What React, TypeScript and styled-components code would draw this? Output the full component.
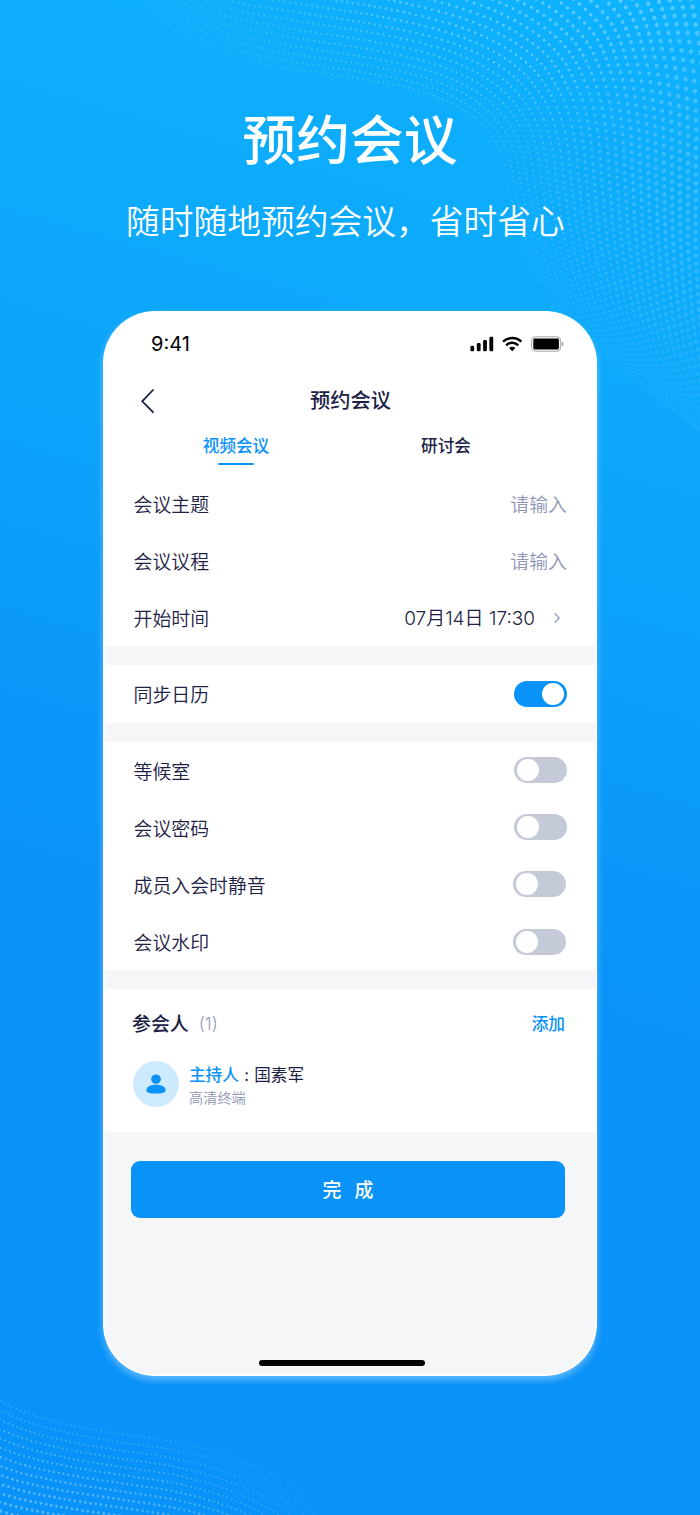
import React from "react";
import styled, { createGlobalStyle } from "styled-components";

const GlobalStyle = createGlobalStyle`
  * { box-sizing: border-box; }
  body {
    margin: 0;
    font-family: Inter, "Noto Sans CJK SC", sans-serif;
    color: #1c2145;
  }
`;

type Point = [number, number];
type Dot = { x: number; y: number; r: number; o: number };
type Rib = { from: Point; to: Point; alpha: number };

const catmull = (a: number, b: number, c: number, d: number, t: number) =>
  0.5 * (2 * b + (c - a) * t + (2 * a - 5 * b + 4 * c - d) * t * t + (3 * b - a - 3 * c + d) * t * t * t);

/* A halftone mesh: columns are evenly spaced along the first curve, rows fan out towards the last one. */
function mesh(ribs: Rib[], rows: number, step: number, ease: number, minRadius: number, maxRadius: number, fullAt: number): Dot[] {
  const point = (u: number, v: number) => {
    const i = Math.floor(u);
    const t = u - i;
    const at = (n: number) => {
      const rib = ribs[Math.max(0, Math.min(ribs.length - 1, n))];
      return [rib.from[0] + (rib.to[0] - rib.from[0]) * v, rib.from[1] + (rib.to[1] - rib.from[1]) * v, rib.alpha];
    };
    const [a, b, c, d] = [at(i - 1), at(i), at(i + 1), at(i + 2)];
    return {
      x: catmull(a[0], b[0], c[0], d[0], t),
      y: catmull(a[1], b[1], c[1], d[1], t),
      o: b[2] + (c[2] - b[2]) * t,
    };
  };

  const columns: number[] = [];
  let travelled = 0;
  let last = point(0, 0);
  for (let s = 1; s < (ribs.length - 1) * 200; s++) {
    const p = point(s / 200, 0);
    travelled += Math.hypot(p.x - last.x, p.y - last.y);
    last = p;
    if (travelled >= step) {
      travelled -= step;
      columns.push(s / 200);
    }
  }

  const dots: Dot[] = [];
  for (let row = 0; row < rows; row++) {
    const v = Math.pow(row / (rows - 1), ease);
    const r = minRadius + (maxRadius - minRadius) * Math.min(1, v / fullAt);
    columns.forEach((u, i) => {
      const next = columns[i + 1] ?? u;
      const p = point(row % 2 ? (u + next) / 2 : u, v);
      if (p.x > -4 && p.x < 704 && p.y > -4 && p.y < 1520) dots.push({ ...p, r });
    });
  }
  return dots;
}

const topDots = mesh(
  [
    { from: [130, -8], to: [275, -315], alpha: 0.04 },
    { from: [190, 40], to: [358, -278], alpha: 0.16 },
    { from: [260, 63], to: [480, -305], alpha: 0.24 },
    { from: [350, 77], to: [608, -281], alpha: 0.38 },
    { from: [410, 88], to: [755, -215], alpha: 0.42 },
    { from: [455, 105], to: [840, -125], alpha: 0.4 },
    { from: [487, 130], to: [850, -30], alpha: 0.3 },
    { from: [503, 160], to: [849, 62], alpha: 0.26 },
    { from: [511, 198], to: [843, 155], alpha: 0.24 },
    { from: [524, 248], to: [833, 260], alpha: 0.19 },
    { from: [549, 302], to: [825, 375], alpha: 0.12 },
    { from: [590, 345], to: [830, 490], alpha: 0.05 },
    { from: [650, 385], to: [860, 580], alpha: 0.01 },
    { from: [710, 410], to: [900, 640], alpha: 0 },
  ],
  44, 5.2, 1.08, 0.8, 2.6, 0.6,
);

const bottomDots = mesh(
  [
    { from: [-45, 1374], to: [-130, 1505], alpha: 0.4 },
    { from: [-8, 1397], to: [-50, 1523], alpha: 0.4 },
    { from: [30, 1414], to: [10, 1540], alpha: 0.4 },
    { from: [75, 1426], to: [70, 1550], alpha: 0.38 },
    { from: [120, 1434], to: [130, 1558], alpha: 0.35 },
    { from: [170, 1441], to: [195, 1570], alpha: 0.31 },
    { from: [220, 1453], to: [255, 1592], alpha: 0.23 },
    { from: [265, 1470], to: [305, 1630], alpha: 0.17 },
    { from: [300, 1491], to: [335, 1680], alpha: 0.12 },
    { from: [330, 1520], to: [350, 1720], alpha: 0.05 },
  ],
  16, 4.4, 1, 0.75, 1.9, 1,
);

const Poster = styled.main`
  position: relative;
  width: 700px;
  height: 1515px;
  overflow: hidden;
  display: flex;
  flex-direction: column;
  align-items: center;
  background: linear-gradient(196deg, #0eb2fd 0%, #0da8fb 25%, #0a95f9 56%, #0992f8 65%);
`;

const Pattern = styled.svg`
  position: absolute;
  inset: 0;
`;

const Headline = styled.h1`
  position: relative;
  margin: 101px 0 0;
  font-size: 53.7px;
  line-height: 80px;
  font-weight: 500;
  color: #fff;
`;

const Tagline = styled.p`
  position: relative;
  margin: 16px 0 0;
  padding-right: 9px;
  font-size: 33.75px;
  line-height: 50px;
  font-weight: 350;
  color: #fff;
`;

const Phone = styled.section`
  position: relative;
  width: 494px;
  height: 1065px;
  padding: 0 2px 2px;
  display: flex;
  flex-direction: column;
  border-radius: 52px;
  overflow: hidden;
  background: #fff;
`;

const Glow = styled.div`
  margin-top: 64px;
  border-radius: 52px;
  box-shadow: 0 4px 7px rgba(255, 255, 255, 0.36);
`;

const StatusBar = styled.div`
  height: 65px;
  padding: 0 31px 0 46px;
  display: flex;
  align-items: center;
  justify-content: space-between;
  font-size: 20px;
  color: #000;
`;

const NavBar = styled.header`
  height: 48px;
  padding: 0 34px 0 35px;
  display: grid;
  grid-template-columns: 14px 1fr 14px;
  align-items: center;
`;

const NavTitle = styled.h2`
  margin: 0;
  padding-bottom: 1px;
  text-align: center;
  font-size: 20.2px;
  font-weight: 500;
`;

const Tabs = styled.nav`
  height: 51px;
  padding: 1px 44px 0 26px;
  display: grid;
  grid-template-columns: 1fr 1fr;
  justify-items: center;
`;

const Tab = styled.div<{ $active?: boolean }>`
  display: flex;
  flex-direction: column;
  align-items: center;
  height: 42px;
  padding-top: 9px;
  font-size: 16.6px;
  line-height: 24px;
  font-weight: 500;
  color: ${(p) => (p.$active ? "#0992f8" : "#1c2145")};

  &::after {
    content: "";
    width: 36px;
    height: 2.5px;
    margin-top: 4.5px;
    border-radius: 2px;
    background: ${(p) => (p.$active ? "#0992f8" : "transparent")};
  }
`;

const Group = styled.div`
  background: #fff;
`;

const Separator = styled.div`
  height: 19.2px;
  background: #f4f6f8;
`;

const Row = styled.div<{ $inset?: number }>`
  height: 57.1px;
  padding: 0 ${(p) => 28.5 + (p.$inset ?? 0)}px 0 28.5px;
  display: flex;
  align-items: center;
  justify-content: space-between;
  font-size: 18.9px;
  font-weight: 350;
`;

const Label = styled.span`
  padding-bottom: 0.5px;
`;

const Placeholder = styled.span`
  margin-right: -0.5px;
  padding-bottom: 1px;
  color: #8f97b5;
`;

const DateValue = styled.span`
  display: flex;
  align-items: center;
  gap: 19px;
  padding-right: 5.5px;
  font-size: 19px;
`;

const DateText = styled.span`
  padding-bottom: 2px;
`;

const Track = styled.span<{ $on?: boolean }>`
  width: 52.5px;
  height: 26px;
  padding: 2px 2.5px;
  display: flex;
  justify-content: ${(p) => (p.$on ? "flex-end" : "flex-start")};
  border-radius: 13px;
  background: ${(p) => (p.$on ? "#0992f8" : "#c5cad9")};
`;

const Knob = styled.span`
  width: 22px;
  height: 22px;
  border-radius: 50%;
  background: #fff;
`;

const People = styled.div`
  height: 143.1px;
  padding: 17.3px 30px 0 27px;
`;

const PeopleHead = styled.div`
  height: 32px;
  display: flex;
  align-items: center;
  font-size: 18.9px;
  font-weight: 500;
`;

const Count = styled.span`
  margin-left: 10px;
  padding-top: 1px;
  font-size: 17.5px;
  font-weight: 300;
  color: #969db8;
`;

const AddLink = styled.span`
  margin-left: auto;
  padding-top: 1px;
  font-size: 16.7px;
  color: #0992f8;
`;

const Member = styled.div`
  margin-top: 21.2px;
  display: flex;
  align-items: center;
  gap: 10px;
  padding-left: 1px;
`;

const Avatar = styled.div`
  width: 46px;
  height: 46px;
  display: grid;
  place-items: center;
  border-radius: 50%;
  background: #ceeafe;
`;

const MemberText = styled.div`
  padding-top: 3.5px;
`;

const MemberName = styled.div`
  display: flex;
  font-size: 16.6px;
  line-height: 24px;
`;

const HostTag = styled.span`
  color: #0992f8;
  font-weight: 500;
`;

const Colon = styled.span`
  width: 15.5px;
  text-align: center;
`;

const MemberNote = styled.div`
  font-size: 14.2px;
  line-height: 21px;
  font-weight: 350;
  color: #8f97b5;
`;

const Footer = styled.div`
  flex: 1;
  padding: 28.5px 30px 0 26px;
  display: flex;
  flex-direction: column;
  align-items: center;
  border-radius: 0 0 50px 50px;
  background: #f4f6f8;
`;

const Submit = styled.button`
  width: 100%;
  height: 57px;
  padding: 0 0 1px;
  display: flex;
  align-items: center;
  justify-content: center;
  gap: 13px;
  border: 0;
  border-radius: 9px;
  background: #0992f8;
  color: #fff;
  font: 500 18.9px Inter, "Noto Sans CJK SC", sans-serif;
`;

const HomeIndicator = styled.div`
  width: 166px;
  height: 6px;
  margin: auto 12px 8.5px 0;
  border-radius: 3px;
  background: #000;
`;

const StatusIcons = () => (
  <svg width="94" height="16" viewBox="0 0 94 16">
    <rect x="0.4" y="9.7" width="3.8" height="5.6" rx="1.3" />
    <rect x="6.8" y="7" width="3.8" height="8.3" rx="1.3" />
    <rect x="13.1" y="4" width="3.8" height="11.3" rx="1.3" />
    <rect x="19.4" y="0.8" width="3.8" height="14.5" rx="1.3" />
    <g fill="none" stroke="#000" strokeWidth="2.4">
      <path d="M33 5.7C38.2 0.8 46.2 0.8 51.4 5.7" />
      <path d="M36.1 9.3C39.7 5.9 44.7 5.9 48.3 9.3" />
    </g>
    <path d="M39 12C40.9 10.3 43.5 10.3 45.4 12L42.2 15.2Z" />
    <rect x="61.6" y="0.8" width="29" height="14.4" rx="3.6" fill="none" stroke="#a5a5a5" strokeWidth="1" />
    <rect x="63.3" y="2.5" width="25.6" height="11" rx="1.4" />
    <path d="M91.9 5.7C94.1 6.7 94.1 9.3 91.9 10.3Z" fill="#9b9b9b" />
  </svg>
);

const BackIcon = () => (
  <svg width="14" height="26" viewBox="0 0 14 26" fill="none" stroke="#1c2145" strokeWidth="1.8" strokeLinecap="round">
    <path d="M13 3L2.2 14.3L13 25.2" />
  </svg>
);

const ChevronIcon = () => (
  <svg width="7" height="10" viewBox="0 0 7 10" fill="none" stroke="#8f97b5" strokeWidth="1.2">
    <path d="M0.8 0.5L5.2 5L0.8 9.5" />
  </svg>
);

const PersonIcon = () => (
  <svg width="20" height="20" viewBox="0 0 20 20" fill="#0992f8">
    <circle cx="10" cy="5.2" r="4.8" />
    <path d="M0.4 16.2C0.4 13 4.2 10.8 10 10.8S19.6 13 19.6 16.2C19.6 18.6 16 19.6 10 19.6S0.4 18.6 0.4 16.2Z" />
  </svg>
);

const Toggle = ({ on }: { on?: boolean }) => (
  <Track $on={on} role="switch" aria-checked={!!on}>
    <Knob />
  </Track>
);

const switches = [
  { label: "等候室", inset: 0 },
  { label: "会议密码", inset: 0 },
  { label: "成员入会时静音", inset: 1 },
  { label: "会议水印", inset: 1 },
];

export default function App() {
  return (
    <Poster>
      <GlobalStyle />
      <Pattern width="700" height="1515" fill="#d6f0ff">
        {[...topDots, ...bottomDots].map((d, i) => (
          <ellipse key={i} cx={d.x.toFixed(1)} cy={d.y.toFixed(1)} rx={(d.r * 0.9).toFixed(2)} ry={d.r.toFixed(2)} opacity={d.o.toFixed(2)} />
        ))}
      </Pattern>
      <Headline>预约会议</Headline>
      <Tagline>随时随地预约会议，省时省心</Tagline>
      <Glow>
        <Phone>
          <StatusBar>
            <span>9:41</span>
            <StatusIcons />
          </StatusBar>
          <NavBar>
            <BackIcon />
            <NavTitle>预约会议</NavTitle>
          </NavBar>
          <Tabs>
            <Tab $active>视频会议</Tab>
            <Tab>研讨会</Tab>
          </Tabs>
          <Group>
            <Row><Label>会议主题</Label><Placeholder>请输入</Placeholder></Row>
            <Row><Label>会议议程</Label><Placeholder>请输入</Placeholder></Row>
            <Row>
              <Label>开始时间</Label>
              <DateValue><DateText>07月14日 17:30</DateText><ChevronIcon /></DateValue>
            </Row>
          </Group>
          <Separator />
          <Row><Label>同步日历</Label><Toggle on /></Row>
          <Separator />
          <Group>
            {switches.map((s) => (
              <Row key={s.label} $inset={s.inset}><Label>{s.label}</Label><Toggle /></Row>
            ))}
          </Group>
          <Separator />
          <People>
            <PeopleHead>
              参会人<Count>(1)</Count>
              <AddLink>添加</AddLink>
            </PeopleHead>
            <Member>
              <Avatar><PersonIcon /></Avatar>
              <MemberText>
                <MemberName><HostTag>主持人</HostTag><Colon>:</Colon>国素军</MemberName>
                <MemberNote>高清终端</MemberNote>
              </MemberText>
            </Member>
          </People>
          <Footer>
            <Submit><span>完</span><span>成</span></Submit>
            <HomeIndicator />
          </Footer>
        </Phone>
      </Glow>
    </Poster>
  );
}
